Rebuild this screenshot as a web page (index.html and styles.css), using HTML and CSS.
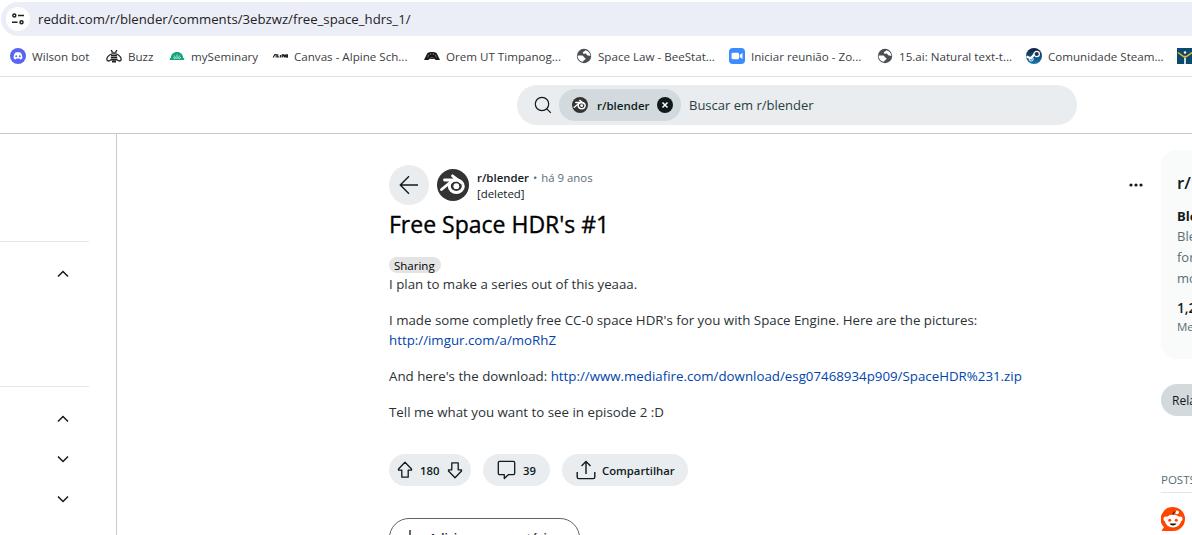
FILE: index.html
```html
<!DOCTYPE html>
<html lang="pt-BR">
<head>
<meta charset="utf-8">
<title>Free Space HDR's #1 : r/blender</title>
<link rel="stylesheet" href="styles.css">
</head>
<body>
<svg class="defs" aria-hidden="true">
  <symbol id="blender" viewBox="0 0 32 32">
    <circle cx="16" cy="16" r="16" fill="#333"/>
    <g fill="none" stroke="#fff" stroke-linecap="round" stroke-linejoin="round">
      <ellipse cx="19.300" cy="17.200" rx="7" ry="6.300" stroke-width="3"/>
      <path d="M7.500 11h12M15.500 6.800l8.500 6.600M4.500 20.500L15.500 11.600" stroke-width="2.800"/>
    </g>
    <circle cx="19.300" cy="17.200" r="2.900" fill="#fff"/>
  </symbol>
  <symbol id="globe" viewBox="0 0 16 16">
    <circle cx="8" cy="8" r="7.200" fill="#4b4f54"/>
    <path d="M1.600 7.500h4.600c1.700.2 1 2 2.600 2.300 1.300.2.900 2-.5 2.200-.9.100-.5 1.300-1.500 1.800C3.700 13.300 1.600 10.700 1.600 7.500zM9.200 2.200c-.2 1.600-2.400.9-2.400 2.500 0 1 1.400 1.300 2.200.9 1.400-.7 1.600 2 3 2 1 0 1.200.5 2.400.4-.1-3-2-5.300-5.200-5.800z" fill="#fff"/>
  </symbol>
  <symbol id="chevron" viewBox="0 0 12 8"><path d="M1 6.500l5-5 5 5" fill="none" stroke="#0f1a1c" stroke-width="1.500"/></symbol>
  <symbol id="vote" viewBox="0 0 16 18"><path d="M8 1.300L1.500 8v1.200h3.300v7h6.400v-7h3.300V8z" fill="none" stroke="#0f1a1c" stroke-width="1.300" stroke-linejoin="round"/></symbol>
</svg>

<div class="address-bar">
  <span class="site-settings"><svg width="14" height="14" viewBox="0 0 14 14" fill="none" stroke="#1f2124" stroke-width="1.500"><circle cx="3.300" cy="3.500" r="1.500"/><path d="M7 3.500h6M1 10.300h5.500"/><circle cx="10.500" cy="10.300" r="1.500"/></svg></span>
  <span class="url">reddit.com/r/blender/comments/3ebzwz/free_space_hdrs_1/</span>
</div>

<nav class="bookmarks">
  <a class="bookmark w96"><svg class="favicon" viewBox="0 0 16 16"><circle cx="8" cy="8" r="8" fill="#5865f2"/><path d="M5.200 4.700c1.900-.6 3.700-.6 5.600 0 1.200 1.800 1.700 3.700 1.500 5.800-.8.600-1.500.8-2.200.9l-.6-1c-.9.200-2 .2-3 0l-.6 1c-.7-.1-1.400-.3-2.200-.9-.2-2.100.3-4 1.500-5.800z" fill="#fff"/><circle cx="6.200" cy="8.300" r="1" fill="#5865f2"/><circle cx="9.800" cy="8.300" r="1" fill="#5865f2"/></svg><span>Wilson bot</span></a>
  <a class="bookmark w63"><svg class="favicon" viewBox="0 0 16 16" fill="none" stroke="#222" stroke-width="1.300"><path d="M5.500 6C3 7.200.8 9.500.8 11.300c0 2.300 3.200 2.100 4.200.2M10.500 6c2.500 1.200 4.700 3.500 4.700 5.300 0 2.300-3.200 2.100-4.200.2M5 2.200l1.500 2M11 2.200l-1.500 2"/><path d="M5.500 5h5M5 7.200h6M4.800 9.400h6.400M4.800 11.600h6.400M6 13.600h4" stroke-width="1.600"/></svg><span>Buzz</span></a>
  <a class="bookmark w103"><svg class="favicon" viewBox="0 0 16 16"><path d="M.7 12c0-1.200.4-2 1.200-2.200C2 6.200 4.500 4 8 4s6 2.200 6.100 5.800c.8.200 1.200 1 1.200 2.200z" fill="#12a57b"/><path d="M8 10.800V6.500M7 10.800L5.200 7.500M9 10.800l1.800-3.300M6 11L4 9.300M10 11l2-1.700" stroke="#fff" stroke-width=".7"/></svg><span>mySeminary</span></a>
  <a class="bookmark w152"><svg class="favicon" viewBox="0 0 16 16"><path d="M1.200 9.500l1.600-3h1.400v3M5.700 6.200v2.800h1.600M8.500 9.500V6.900M10.200 9.500V6.900h1.200v1h-1M12.400 9.500V6.800l1.200 2.200V6.500M16 6.900h-1.200v2.200H16M14.800 8H16" stroke="#222" fill="none" stroke-width="1.200"/></svg><span>Canvas - Alpine Sch...</span></a>
  <a class="bookmark w152"><svg class="favicon" viewBox="0 0 16 16"><path d="M0 12L3.300 5.200C5 3.600 11 3.600 12.700 5.200L16 12h-4.500L11 11H5l-.5 1z" fill="#171717"/><path d="M3.500 9.500l1.500-3M6.500 7l.4-2M9.500 7l-.4-2M12.500 9.500l-1.500-3M5.500 11.500c.5-2.600 4.500-2.600 5 0" stroke="#aaa" stroke-width=".6" fill="none"/></svg><span>Orem UT Timpanog...</span></a>
  <a class="bookmark w153"><svg class="favicon"><use href="#globe"/></svg><span>Space Law - BeeStat...</span></a>
  <a class="bookmark w148"><svg class="favicon" viewBox="0 0 16 16"><rect width="16" height="16" rx="3.800" fill="#3c8cff"/><rect x="2.500" y="4.700" width="7.600" height="6.600" rx="1.300" fill="#fff"/><path d="M10.700 7l2.800-2v6l-2.800-2z" fill="#fff"/></svg><span>Iniciar reunião - Zo...</span></a>
  <a class="bookmark w149"><svg class="favicon"><use href="#globe"/></svg><span>15.ai: Natural text-t...</span></a>
  <a class="bookmark w151"><svg class="favicon" viewBox="0 0 16 16"><defs><linearGradient id="steam" x2="0" y2="1"><stop offset="0" stop-color="#111d3c"/><stop offset="1" stop-color="#157bb7"/></linearGradient></defs><circle cx="8" cy="8" r="8" fill="url(#steam)"/><path d="M.5 8.500l4.500 2L8.500 6" stroke="#fff" stroke-width="2.200" fill="none"/><circle cx="5.200" cy="11" r="2" fill="none" stroke="#fff"/><circle cx="10.700" cy="6" r="2.700" fill="#17325e" stroke="#fff" stroke-width="1.200"/></svg><span>Comunidade Steam...</span></a>
  <a class="bookmark"><svg class="favicon" viewBox="0 0 16 16"><path d="M0 0h16v16H0z" fill="#0b4a6f"/><path d="M1 4.500l5.500 4h3l5.500-4" stroke="#f5b81c" stroke-width="1.500" fill="none"/><path d="M8 9.500V16" stroke="#fff" stroke-width="1.600"/><circle cx="8" cy="4.500" r="1.200" fill="#fff"/></svg></a>
</nav>

<header class="site-header">
  <div class="search">
    <svg class="search-icon" viewBox="0 0 18 18" fill="none" stroke="#0f1a1c" stroke-width="1.200"><circle cx="8" cy="8" r="6.700"/><path d="M12.800 12.800l4 4"/></svg>
    <div class="search-chip">
      <svg class="chip-logo"><use href="#blender"/></svg>
      <span class="chip-name">r/blender</span>
      <svg class="chip-close" viewBox="0 0 16 16"><circle cx="8" cy="8" r="8" fill="#0f1a1c"/><path d="M5.500 5.500l5 5M10.500 5.500l-5 5" stroke="#fff" stroke-width="1.500"/></svg>
    </div>
    <span class="search-placeholder">Buscar em r/blender</span>
  </div>
</header>

<div class="page">
  <aside class="left-nav">
    <div class="nav-group nav-top"></div>
    <div class="nav-group nav-recent"><svg class="chevron"><use href="#chevron"/></svg></div>
    <div class="nav-group nav-more">
      <svg class="chevron"><use href="#chevron"/></svg>
      <svg class="chevron down"><use href="#chevron"/></svg>
      <svg class="chevron down"><use href="#chevron"/></svg>
    </div>
  </aside>

  <main class="post">
    <div class="credit">
      <span class="back"><svg width="20" height="20" viewBox="0 0 20 20" fill="none" stroke="#0f1a1c" stroke-width="1.400"><path d="M19 10H1.500M10 1.200L1.300 10l8.700 8.800"/></svg></span>
      <svg class="avatar"><use href="#blender"/></svg>
      <div class="credit-text">
        <div class="credit-line"><b class="sub">r/blender</b><span class="dot">•</span><span class="age">há 9 anos</span></div>
        <div class="author">[deleted]</div>
      </div>
      <svg class="overflow" viewBox="0 0 14 4" fill="#0f1a1c"><circle cx="2" cy="2" r="1.600"/><circle cx="7" cy="2" r="1.600"/><circle cx="12" cy="2" r="1.600"/></svg>
    </div>
    <h1>Free Space HDR's #1</h1>
    <span class="flair">Sharing</span>
    <div class="body">
      <p>I plan to make a series out of this yeaaa.</p>
      <p>I made some completly free CC-0 space HDR's for you with Space Engine. Here are the pictures:<br><a>http://imgur.com/a/moRhZ</a></p>
      <p>And here's the download: <a>http://www.mediafire.com/download/esg07468934p909/SpaceHDR%231.zip</a></p>
      <p>Tell me what you want to see in episode 2 :D</p>
    </div>
    <div class="actions">
      <div class="pill votes"><svg class="vote"><use href="#vote"/></svg><span class="count">180</span><svg class="vote down"><use href="#vote"/></svg></div>
      <div class="pill comments"><svg width="20" height="20" viewBox="0 0 20 20" fill="none" stroke="#0f1a1c" stroke-width="1.300" stroke-linejoin="round"><path d="M2.700 1.300h13.600c.8 0 1.400.6 1.400 1.400v10.600c0 .8-.6 1.400-1.400 1.400h-5L7.300 18.500v-3.800H2.700c-.8 0-1.400-.6-1.400-1.400V2.700c0-.8.6-1.400 1.400-1.400z"/></svg><span class="count">39</span></div>
      <div class="pill share"><svg width="20" height="20" viewBox="0 0 20 20" fill="none" stroke="#0f1a1c" stroke-width="1.400"><path d="M1.200 12v5c0 1 .6 1.600 1.600 1.600h14.400c1 0 1.600-.6 1.600-1.600v-5M10 14V1.500M5.500 6L10 1.500 14.500 6"/></svg><span>Compartilhar</span></div>
    </div>
    <div class="add-comment"><svg width="16" height="16" viewBox="0 0 16 16" stroke="#0f1a1c" stroke-width="1.300"><path d="M8 0v16M0 8h16"/></svg><span>Adicionar comentário</span></div>
  </main>

  <aside class="right-rail">
    <section class="about">
      <h2>r/blender</h2>
      <h3>Blender</h3>
      <div class="about-text">Ble<br>for<br>mo</div>
      <b class="members">1,2</b>
      <div class="members-label">Me</div>
    </section>
    <span class="related">Related</span>
    <div class="posts-title">POSTS</div>
    <svg class="snoo" viewBox="0 0 24 24"><path d="M12 0a12 12 0 1 1 0 24H1.500c-.8 0-1-.8-.4-1.300L3 20.300A12 12 0 0 1 12 0z" fill="#ff4500"/><circle cx="4.800" cy="12" r="2.400" fill="#fff"/><circle cx="19.200" cy="12" r="2.400" fill="#fff"/><ellipse cx="12" cy="14" rx="8" ry="6.400" fill="#fff"/><circle cx="16" cy="5.300" r="1.900" fill="#fff"/><path d="M12 8c0-2.500 1-3.300 2.700-3.100" stroke="#111" fill="none"/><circle cx="8.700" cy="13.200" r="1.500" fill="#ff4500"/><circle cx="15.300" cy="13.200" r="1.500" fill="#ff4500"/><path d="M8.500 16.500h7c-1.200 2.600-5.800 2.600-7 0z" fill="#111"/></svg>
  </aside>
</div>
</body>
</html>
```
FILE: styles.css
```css
* { box-sizing: border-box; }
body { margin: 0; width: 1192px; height: 535px; overflow: hidden; background: #fff; color: #0f1a1c; font-family: "Open Sans", "Noto Sans", sans-serif; font-size: 13px; white-space: nowrap; }
h1, h2, h3, p { margin: 0; }
svg { display: block; flex: none; }
.defs { display: none; }

.address-bar { display: flex; align-items: center; height: 34px; margin: 2px 0 0 1px; padding-left: 5px; border-radius: 17px 0 0 17px; background: #ebeef7; }
.site-settings { display: grid; place-items: center; width: 24px; height: 24px; margin-right: 8px; border-radius: 50%; background: #fff; }
.url { font-size: 13.200px; color: #1f2124; }

.bookmarks { display: flex; align-items: center; height: 41px; padding-left: 10px; border-bottom: 1px solid #dfe1e3; font-size: 11.600px; color: #3c4043; }
.bookmark { display: flex; flex: none; align-items: center; gap: 6px; }
.favicon { width: 16px; height: 16px; }
.w63 { width: 63px; }
.w96 { width: 96px; }
.w103 { width: 103px; }
.w148 { width: 148px; }
.w149 { width: 149px; }
.w151 { width: 151px; }
.w152 { width: 152px; }
.w153 { width: 153px; }

.site-header { height: 57px; padding: 8px 0 0 517px; border-bottom: 1px solid #c8cacb; }
.search { display: flex; align-items: center; width: 560px; height: 40px; padding-left: 17px; border-radius: 20px; background: #e9edef; }
.search-icon { width: 18px; height: 18px; margin-right: 7px; }
.search-chip { display: flex; align-items: center; width: 122px; height: 32px; padding-left: 13px; border-radius: 16px; background: #d2dadd; }
.chip-logo { width: 16px; height: 16px; }
.chip-name { width: 60px; margin-left: 9px; font-size: 11.500px; font-weight: 600; }
.chip-close { width: 16px; height: 16px; }
.search-placeholder { margin-left: 8px; color: #2a3c42; }

.page { display: flex; height: 401px; }
.left-nav { flex: none; width: 117px; border-right: 1px solid #c8cacb; }
.nav-group { display: flex; flex-direction: column; width: 89px; padding-left: 57px; }
.nav-top { height: 108px; border-bottom: 1px solid #e3e5e6; }
.nav-recent { height: 145px; padding-top: 28px; border-bottom: 1px solid #e3e5e6; }
.nav-more { gap: 32px; padding-top: 28px; }
.chevron { width: 12px; height: 8px; }
.down { transform: rotate(180deg); }

.post { flex: none; width: 756px; margin-left: 272px; padding-top: 31px; }
.credit { display: flex; align-items: center; height: 40px; }
.back { display: grid; place-items: center; width: 40px; height: 40px; margin-right: 8px; border-radius: 50%; background: #e9edef; }
.avatar { width: 32px; height: 32px; margin-right: 8px; }
.credit-text { padding-top: 2px; font-size: 11.400px; line-height: 16px; }
.credit-line { display: flex; }
.sub { font-weight: 600; }
.dot { margin: 0 4px; color: #576f76; }
.age { color: #576f76; }
.overflow { width: 14px; height: 4px; margin-left: auto; margin-right: 2px; }
h1 { height: 52px; padding-top: 3px; font-size: 23px; line-height: 32px; font-weight: 500; color: #000; -webkit-text-stroke: 0.35px #000; }
.flair { display: flex; align-items: center; width: 52px; height: 16px; padding-left: 5px; border-radius: 8px; background: #e4e4e4; font-size: 11.500px; color: #000; }
.body { padding-top: 1px; font-size: 13.300px; line-height: 20px; color: #2a3236; }
.body p { margin-bottom: 16px; }
.body a { color: #0045ac; }
.actions { display: flex; gap: 12px; margin-top: 32px; }
.pill { display: flex; align-items: center; height: 32px; border-radius: 16px; background: #e9edef; font-size: 11.300px; font-weight: 600; }
.votes { width: 82px; padding-left: 8px; }
.vote { width: 16px; height: 18px; }
.votes .count { width: 20px; margin: 0 6px 0 7px; }
.votes .down { margin-left: 1px; }
.comments { width: 67px; padding-left: 14px; gap: 6px; }
.share { width: 126px; padding-left: 14px; gap: 6px; }
.add-comment { display: flex; align-items: center; gap: 11px; width: 191px; height: 40px; margin-top: 32px; padding-left: 12px; border: 1px solid #5c6366; border-radius: 20px; font-size: 12px; font-weight: 600; }

.right-rail { flex: none; width: 200px; margin-left: 16px; padding-top: 16px; }
.about { height: 209px; padding: 22px 16px 0; border-radius: 16px; background: #f9fafa; }
.about h2 { font-size: 17px; line-height: 22px; font-weight: 600; }
.about h3 { margin-top: 12px; font-size: 13px; line-height: 20px; font-weight: 700; }
.about-text { line-height: 21px; color: #576f76; }
.members { display: block; margin-top: 9px; font-size: 13.500px; line-height: 20px; font-weight: 600; }
.members-label { font-size: 11.500px; line-height: 18px; color: #576f76; }
.related { display: flex; align-items: center; width: 80px; height: 32px; margin-top: 25px; padding-left: 11px; border-radius: 16px; background: #d2dadd; font-size: 12px; font-weight: 500; }
.posts-title { height: 20px; margin-top: 57px; border-bottom: 1px solid #e3e5e6; font-size: 11.500px; line-height: 14px; color: #576f76; }
.snoo { width: 24px; height: 24px; margin-top: 14px; }
```
